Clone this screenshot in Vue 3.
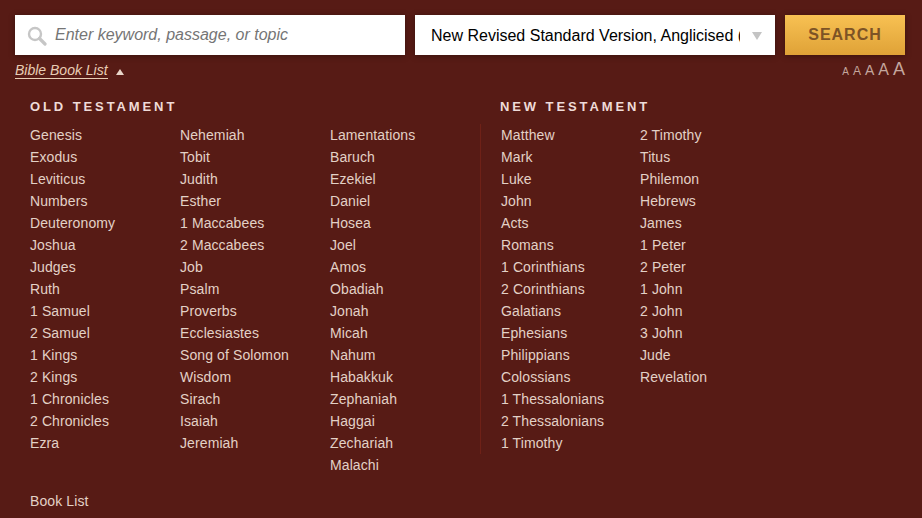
<script setup>
const ot = [
  ['Genesis','Exodus','Leviticus','Numbers','Deuteronomy','Joshua','Judges','Ruth','1 Samuel','2 Samuel','1 Kings','2 Kings','1 Chronicles','2 Chronicles','Ezra'],
  ['Nehemiah','Tobit','Judith','Esther','1 Maccabees','2 Maccabees','Job','Psalm','Proverbs','Ecclesiastes','Song of Solomon','Wisdom','Sirach','Isaiah','Jeremiah'],
  ['Lamentations','Baruch','Ezekiel','Daniel','Hosea','Joel','Amos','Obadiah','Jonah','Micah','Nahum','Habakkuk','Zephaniah','Haggai','Zechariah','Malachi']
]
const nt = [
  ['Matthew','Mark','Luke','John','Acts','Romans','1 Corinthians','2 Corinthians','Galatians','Ephesians','Philippians','Colossians','1 Thessalonians','2 Thessalonians','1 Timothy'],
  ['2 Timothy','Titus','Philemon','Hebrews','James','1 Peter','2 Peter','1 John','2 John','3 John','Jude','Revelation']
]
const sizes = [
  { s: 'a1', key: 1 }, { s: 'a2', key: 2 }, { s: 'a3', key: 3 }, { s: 'a4', key: 4 }, { s: 'a5', key: 5 }
]
</script>

<template>
  <div class="page">
    <div class="bar">
      <div class="field search">
        <svg class="mag" width="20" height="20" viewBox="0 0 20 20">
          <circle cx="8" cy="8" r="6" fill="none" stroke="#c6c6c6" stroke-width="2.4" />
          <path d="M12.5 12.5 L18 18" stroke="#c6c6c6" stroke-width="3.2" stroke-linecap="round" />
        </svg>
        <span class="ph">Enter keyword, passage, or topic</span>
      </div>
      <div class="field version">
        <span class="vtext">New Revised Standard Version, Anglicised (NRSVA)</span>
        <span class="caret"></span>
      </div>
      <div class="btn">SEARCH</div>
    </div>
    <div class="sub">
      <div class="toggle"><span class="tlink">Bible Book List</span><span class="up"></span></div>
      <div class="sizes"><span v-for="a in sizes" :key="a.key" :class="a.s">A</span></div>
    </div>
    <div class="lists">
      <section class="old">
        <h2>OLD TESTAMENT</h2>
        <div class="cols">
          <ul v-for="(c, i) in ot" :key="i" class="col"><li v-for="b in c" :key="b">{{ b }}</li></ul>
        </div>
      </section>
      <section class="new">
        <h2>NEW TESTAMENT</h2>
        <div class="cols divided">
          <ul v-for="(c, i) in nt" :key="i" class="col"><li v-for="b in c" :key="b">{{ b }}</li></ul>
        </div>
      </section>
    </div>
    <div class="foot">Book List</div>
  </div>
</template>

<style scoped>
.page {
  width: 922px;
  height: 518px;
  box-sizing: border-box;
  padding: 15px 17px 0 15px;
  background: #571b15;
  font-family: "Liberation Sans", Arial, sans-serif;
  overflow: hidden;
}
.bar { display: flex; gap: 10px; height: 40px; }
.field {
  background: #fff;
  display: flex;
  align-items: center;
  box-shadow: 0 1px 6px rgba(0,0,0,.35);
}
.search { width: 390px; padding-left: 12px; box-sizing: border-box; }
.mag { flex: none; margin-top: 2px; }
.ph { margin-left: 8px; font-size: 16px; font-style: italic; color: #757575; }
.version { width: 360px; box-sizing: border-box; padding-left: 16px; position: relative; }
.vtext {
  width: 309px; overflow: hidden; white-space: nowrap;
  font-size: 16px; color: #000; margin-top: 2px;
}
.caret {
  position: absolute; left: 337px; top: 17px;
  border-left: 5px solid transparent; border-right: 5px solid transparent;
  border-top: 8px solid #c4c4c4;
}
.btn {
  width: 120px;
  display: flex; align-items: center; justify-content: center;
  background: linear-gradient(#f8c153, #dfa237);
  color: #7d5325;
  font-size: 16px; font-weight: 700; letter-spacing: 1px;
  box-shadow: 0 1px 6px rgba(0,0,0,.35);
}
.sub { display: flex; justify-content: space-between; align-items: flex-start; height: 43px; }
.toggle { display: flex; align-items: center; margin-top: 7px; height: 17px; }
.tlink {
  font-size: 14px; font-style: italic; color: #e8cdb4; line-height: 16px;
  border-bottom: 1px solid #e8cdb4;
}
.up {
  margin-left: 8px; margin-top: 3px;
  border-left: 4px solid transparent; border-right: 4px solid transparent;
  border-bottom: 6px solid #e8d5c8;
}
.sizes { display: flex; align-items: baseline; gap: 4px; color: #c4a79e; line-height: 20px; margin-top: 4px; height: 22px; }
.a1 { font-size: 10px; }
.a2 { font-size: 12px; }
.a3 { font-size: 14px; }
.a4 { font-size: 16px; }
.a5 { font-size: 18px; }
.lists { display: flex; padding-left: 15px; }
.old { width: 450px; flex: none; }
.new { flex: 1; padding-left: 20px; }
h2 {
  margin: 0; height: 26px; line-height: 18px;
  font-size: 13px; font-weight: 700; letter-spacing: 2.9px; color: #efdbd8;
}
.cols { display: flex; }
.divided { margin-left: -20px; padding-left: 21px; position: relative; }
.divided::before {
  content: ""; position: absolute; left: 0; top: 0; width: 1px; height: 330px; background: #6f2117;
}
.col { list-style: none; margin: 0; padding: 0; width: 150px; }
.divided .col { width: 139px; }
li { height: 22px; line-height: 22px; font-size: 14px; letter-spacing: .1px; color: #e3d1c6; white-space: nowrap; }
.foot { margin: 14px 0 0 15px; font-size: 14px; letter-spacing: .1px; line-height: 22px; color: #e3d1c6; }
</style>
